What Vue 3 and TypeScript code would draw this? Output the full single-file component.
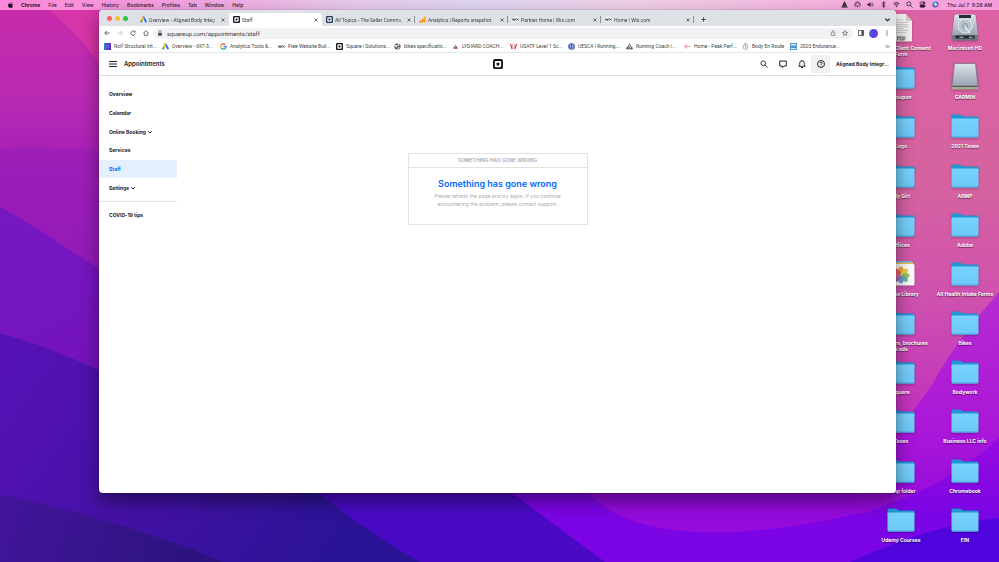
<script setup lang="ts">
import { ref } from 'vue'

interface Tab { title: string; icon: string }
interface Bookmark { label: string; icon: string; short?: boolean }
interface DesktopItem { label: string; icon: string }
interface NavItem { label: string; expandable?: boolean }

const menus: string[] = ['File', 'Edit', 'View', 'History', 'Bookmarks', 'Profiles', 'Tab', 'Window', 'Help']
const statusIcons: string[] = ['cone', 'airdrop', 'volume', 'bluetooth', 'wifi', 'search', 'control', 'siri']

const tabs: Tab[] = [
  { title: 'Overview - Aligned Body Integ', icon: 'ads' },
  { title: 'Staff', icon: 'square' },
  { title: 'All Topics - The Seller Commu', icon: 'squareblue' },
  { title: 'Analytics | Reports snapshot', icon: 'analytics' },
  { title: 'Partner Home | Wix.com', icon: 'wix' },
  { title: 'Home | Wix.com', icon: 'wix' },
]
const activeTab = ref(1)

const bookmarks: Bookmark[] = [
  { label: 'Rolf Structural Int...', icon: 'rolf' },
  { label: 'Overview - 697-3...', icon: 'ads' },
  { label: 'Analytics Tools &...', icon: 'google' },
  { label: 'Free Website Buil...', icon: 'wix' },
  { label: 'Square | Solutions...', icon: 'square' },
  { label: 'bikes specificatio...', icon: 'globe' },
  { label: 'LYDIARD COACH...', icon: 'lydiard' },
  { label: 'USATF Level 1 Sc...', icon: 'usatf' },
  { label: 'UESCA | Running,...', icon: 'uesca' },
  { label: 'Running Coach |...', icon: 'running' },
  { label: 'Home - Peak Perf...', icon: 'peak' },
  { label: 'Body En Route', icon: 'body', short: true },
  { label: '2020 Endurance...', icon: 'endurance' },
]

const nav: NavItem[] = [
  { label: 'Overview' },
  { label: 'Calendar' },
  { label: 'Online Booking', expandable: true },
  { label: 'Services' },
  { label: 'Staff' },
  { label: 'Settings', expandable: true },
]
const activeNav = ref('Staff')
const address = ref('squareup.com/appointments/staff')

const desktop: DesktopItem[] = [
  { label: 'Massage Client Consent Form', icon: 'pdf' },
  { label: 'Macintosh HD', icon: 'disk' },
  { label: 'Groupon', icon: 'folder' },
  { label: 'GARMIN', icon: 'drive' },
  { label: 'Logo', icon: 'folder' },
  { label: '2021 Taxes', icon: 'folder' },
  { label: 'My Girl', icon: 'folder' },
  { label: 'ABMP', icon: 'folder' },
  { label: 'Offices', icon: 'folder' },
  { label: 'Adobe', icon: 'folder' },
  { label: 'Photos Library', icon: 'photos' },
  { label: 'All Health Intake Forms', icon: 'folder' },
  { label: 'Bike flyers, brochures &\u00a0ads', icon: 'folder' },
  { label: 'Bikes', icon: 'folder' },
  { label: 'Square', icon: 'folder' },
  { label: 'Bodywork', icon: 'folder' },
  { label: 'Taxes', icon: 'folder' },
  { label: 'Business LLC info', icon: 'folder' },
  { label: 'Temp folder', icon: 'folder' },
  { label: 'Chromebook', icon: 'folder' },
  { label: 'Udemy Courses', icon: 'folder' },
  { label: 'EIN', icon: 'folder' },
]
</script>

<template>
  <div class="screen">
    <svg class="defs" aria-hidden="true">
      <defs>
        <linearGradient id="g-rolf"><stop offset="0" stop-color="#2b8fd0" /><stop offset=".5" stop-color="#4a3fc9" /><stop offset="1" stop-color="#6a28c8" /></linearGradient>
        <linearGradient id="g-folder" x2="0" y2="1"><stop offset="0" stop-color="#78d2fd" /><stop offset="1" stop-color="#6cc8f7" /></linearGradient>
        <linearGradient id="g-metal" x2="0" y2="1"><stop offset="0" stop-color="#dce4ea" /><stop offset="1" stop-color="#98a4ae" /></linearGradient>
      </defs>
      <symbol id="i-apple" viewBox="0 0 12 14"><path d="M8.2 0c.1 1.500-1 2.900-2.400 3C5.600 1.600 6.900.2 8.200 0zM11.500 10.500c-.7 1.700-1.700 3-2.800 3-1 0-1.300-.6-2.500-.6s-1.500.6-2.500.6C2 13.500.2 10.700.2 7.800c0-2.800 1.700-4.200 3.400-4.200 1.100 0 1.900.7 2.700.7s1.700-.7 3-.7c.7 0 1.700.3 2.300 1.200-2.200 1.300-1.900 4.600-.1 5.700z" /></symbol>
      <symbol id="i-cone" viewBox="0 0 16 16"><path d="M1 13h14v2H1z" fill="#222" /><path d="M7 1h2l5 12H2z" fill="#333" /></symbol>
      <symbol id="i-airdrop" viewBox="0 0 16 16" fill="none" stroke="currentColor" stroke-width="1.500"><path d="M3.500 13a6.500 6.500 0 1 1 9 0M5.500 11a3.800 3.800 0 1 1 5 0" /><path d="M8 9l-2 5h4z" fill="currentColor" stroke="none" /></symbol>
      <symbol id="i-volume" viewBox="0 0 16 16"><path d="M1 6h3l4-4v12l-4-4H1z" /><path d="M10 5.500q2 2.500 0 5M12 3.500q3.500 4.500 0 9" fill="none" stroke="currentColor" stroke-width="1.300" /></symbol>
      <symbol id="i-bluetooth" viewBox="0 0 16 16" fill="none" stroke="currentColor" stroke-width="1.600"><path d="M4 4.500l8 7L8 15V1l4 3.500-8 7" /></symbol>
      <symbol id="i-wifi" viewBox="0 0 16 16" fill="none" stroke="currentColor" stroke-width="1.900"><path d="M1 6q7-6 14 0M3.500 9q4.500-4 9 0" /><path d="M8 14l-2.500-3q2.500-2 5 0z" fill="currentColor" stroke="none" /></symbol>
      <symbol id="i-search" viewBox="0 0 16 16" fill="none" stroke="currentColor" stroke-width="1.800"><circle cx="6.500" cy="6.500" r="4.700" /><path d="M10 10l5 5" /></symbol>
      <symbol id="i-control" viewBox="0 0 16 16" fill="none" stroke="currentColor" stroke-width="1.500"><rect x="2" y="2" width="12" height="5" rx="2.500" /><rect x="2" y="9" width="12" height="5" rx="2.500" fill="currentColor" /><circle cx="11" cy="4.500" r="1.500" fill="currentColor" /></symbol>
      <symbol id="i-siri" viewBox="0 0 16 16"><circle cx="8" cy="8" r="7" fill="#3e60c9" /><path d="M2 5a7 7 0 0 1 8-4l-2 7z" fill="#35c4d4" /><path d="M14 4a7 7 0 0 1-3 10L8 8z" fill="#e04f92" /><circle cx="8" cy="8" r="3" fill="#e5f5ff" /></symbol>

      <symbol id="i-ads" viewBox="0 0 16 16"><path d="M8 2.500l5.500 10" stroke="#2f74ea" stroke-width="4.400" stroke-linecap="round" /><path d="M7.500 3L3 11" stroke="#f6b90b" stroke-width="4" stroke-linecap="round" /><circle cx="3" cy="12.300" r="2.400" fill="#34a853" /></symbol>
      <symbol id="i-square" viewBox="0 0 16 16"><rect width="16" height="16" rx="3" fill="#15171a" /><rect x="3" y="3" width="10" height="10" rx="1.500" fill="#fff" /><rect x="5.800" y="5.800" width="4.400" height="4.400" rx=".8" fill="#15171a" /></symbol>
      <symbol id="i-squareblue" viewBox="0 0 16 16"><rect width="16" height="16" rx="3" fill="#273650" /><rect x="3" y="3" width="10" height="10" rx="1.500" fill="#fff" /><rect x="5.500" y="5.500" width="5" height="5" rx=".8" fill="#273650" /></symbol>
      <symbol id="i-analytics" viewBox="0 0 16 16"><rect x="11" y="1" width="4" height="14" rx="2" fill="#f9ab00" /><rect x="6" y="6" width="4.500" height="9" rx="2" fill="#ef8420" /><circle cx="3" cy="13" r="2.200" fill="#e37400" /></symbol>
      <symbol id="i-wix" viewBox="0 0 16 16"><rect y="3" width="16" height="10" fill="#fff" /><path d="M1 5.500l1.500 5 1.500-4 1.500 4 1.500-5M9 5.500v5M10.500 5.500l4.500 5M15 5.500l-4.500 5" fill="none" stroke="#222" stroke-width="1.500" /></symbol>
      <symbol id="i-rolf" viewBox="0 0 16 16"><rect width="16" height="16" fill="url(#g-rolf)" /><rect x="4" y="4" width="7" height="8" fill="#5e5bdc" /></symbol>
      <symbol id="i-google" viewBox="0 0 16 16" fill="none" stroke-width="3"><path d="M3 4.800A6 6 0 0 1 12 3.500" stroke="#ea4335" /><path d="M3 11a6 6 0 0 1 0-6" stroke="#fbbc04" /><path d="M12 12.500A6 6 0 0 1 3 11" stroke="#34a853" /><path d="M8 8h6q0 3-2.200 4.700" stroke="#4285f4" /></symbol>
      <symbol id="i-globe" viewBox="0 0 16 16"><circle cx="8" cy="8" r="7" fill="#4c5055" /><path d="M3 4l4 2 1 3-3 1-3-3zM9 2l4 2-2 3-3-1zM9 10l4-1-2 4-3 1z" fill="#fff" /></symbol>
      <symbol id="i-lydiard" viewBox="0 0 16 16"><path d="M8 4l4 6H4z" fill="#555" /><path d="M3 10h10v3H3z" fill="#a33440" /><circle cx="8" cy="8" r="1.200" fill="#fff" /></symbol>
      <symbol id="i-usatf" viewBox="0 0 16 16" fill="none" stroke="#d02733" stroke-width="2.600"><path d="M1 2l4 12M15 2l-4 12" /><path d="M6 2v8q2 4 4 0V2" stroke="#e9777d" stroke-width="1.500" /></symbol>
      <symbol id="i-uesca" viewBox="0 0 16 16"><circle cx="8" cy="8" r="7.500" fill="#3450b2" /><circle cx="8" cy="8" r="5.500" fill="none" stroke="#b9c4f0" /><path d="M5.500 5v4q2.500 4 5 0V5" fill="none" stroke="#fff" stroke-width="1.500" /></symbol>
      <symbol id="i-running" viewBox="0 0 16 16" fill="none" stroke="#44474b" stroke-width="1.600"><path d="M8 2l6 11H2zM5 8l6 5M10 6l-6 7" /><circle cx="3" cy="12" r="2" /><circle cx="13" cy="12" r="2" /></symbol>
      <symbol id="i-peak" viewBox="0 0 16 16" fill="none" stroke="#e6747c" stroke-width="1.500"><path d="M1 5h7M1 8h14M1 11h6" /></symbol>
      <symbol id="i-body" viewBox="0 0 16 16" fill="none" stroke="#777a7e" stroke-width="1.400"><circle cx="8" cy="9" r="5.500" /><path d="M5 2h6M8 5v5l3 1" /></symbol>
      <symbol id="i-endurance" viewBox="0 0 16 16"><rect x=".7" y=".7" width="14.600" height="14.600" fill="#d8edfa" stroke="#1d6aa8" stroke-width="1.500" /><path d="M2 6h12v5H2z" fill="#2478b5" /><path d="M3 8.500h10" stroke="#fff" stroke-width="1.200" stroke-dasharray="2 1" /></symbol>

      <symbol id="i-close" viewBox="0 0 16 16" fill="none" stroke="currentColor" stroke-width="3"><path d="M2 2l12 12M14 2L2 14" /></symbol>
      <symbol id="i-plus" viewBox="0 0 16 16" fill="none" stroke="currentColor" stroke-width="3"><path d="M8 1v14M1 8h14" /></symbol>
      <symbol id="i-down" viewBox="0 0 16 16" fill="none" stroke="currentColor" stroke-width="4"><path d="M1 5l7 7 7-7" /></symbol>
      <symbol id="i-back" viewBox="0 0 16 16" fill="none" stroke="currentColor" stroke-width="2.200"><path d="M15 8H2M8 2L2 8l6 6" /></symbol>
      <symbol id="i-forward" viewBox="0 0 16 16" fill="none" stroke="currentColor" stroke-width="2.200"><path d="M1 8h13M8 2l6 6-6 6" /></symbol>
      <symbol id="i-reload" viewBox="0 0 16 16" fill="none" stroke="currentColor" stroke-width="2.200"><path d="M13 4.500A6 6 0 1 0 14 10" /><path d="M14.500 1v5.500H9z" fill="currentColor" stroke="none" /></symbol>
      <symbol id="i-home" viewBox="0 0 16 16" fill="none" stroke="currentColor" stroke-width="2"><path d="M1 8l7-6 7 6M3.500 7v7.500h9V7" /></symbol>
      <symbol id="i-lock" viewBox="0 0 16 16"><rect x="3" y="7" width="10" height="8" rx="1" fill="currentColor" /><path d="M5 7V4.500a3 3 0 0 1 6 0V7" fill="none" stroke="currentColor" stroke-width="1.700" /></symbol>
      <symbol id="i-share" viewBox="0 0 16 16" fill="none" stroke="currentColor" stroke-width="1.500"><path d="M5 7H3v8h10V7h-2M8 10V2M5 4.500L8 1.500l3 3" /></symbol>
      <symbol id="i-star" viewBox="0 0 16 16" fill="none" stroke="currentColor" stroke-width="1.600"><path d="M8 1.500l2 4.600 5 .4-3.800 3.200 1.200 4.800L8 12l-4.400 2.500 1.200-4.800L1 6.500l5-.4z" /></symbol>
      <symbol id="i-panel" viewBox="0 0 16 16"><rect x="1.500" y="1.500" width="13" height="13" fill="none" stroke="currentColor" stroke-width="2" /><path d="M9 1h6v14H9z" /></symbol>
      <symbol id="i-dots" viewBox="0 0 16 16"><circle cx="8" cy="2.500" r="1.800" /><circle cx="8" cy="8" r="1.800" /><circle cx="8" cy="13.500" r="1.800" /></symbol>
      <symbol id="i-more" viewBox="0 0 16 16" fill="none" stroke="currentColor" stroke-width="2.400"><path d="M3 4l4 4-4 4M9 4l4 4-4 4" /></symbol>
      <symbol id="i-menu" viewBox="0 0 16 16" stroke="currentColor" stroke-width="2"><path d="M0 3h16M0 8h16M0 13h16" /></symbol>
      <symbol id="i-chat" viewBox="0 0 16 16" fill="none" stroke="currentColor" stroke-width="2"><path d="M1.500 2h13v10H9.500L6.500 15v-3h-5z" /></symbol>
      <symbol id="i-bell" viewBox="0 0 16 16" fill="none" stroke="currentColor" stroke-width="1.900"><path d="M1.500 12.500h13L12.500 9.500V6a4.500 4.500 0 0 0-9 0v3.500zM8 0v2M6 15h4" /></symbol>
      <symbol id="i-help" viewBox="0 0 16 16" fill="none" stroke="currentColor" stroke-width="1.900"><circle cx="8" cy="8" r="7" /><path d="M5.800 6.500a2.200 2.200 0 1 1 3.300 1.900Q8 9 8 10" /><path d="M8 11v1.600" /></symbol>

      <symbol id="i-folder" viewBox="0 0 56 56"><path d="M1 8q0-3 3-3h13q2 0 3 1l4 3h28q3 0 3 3v8H1z" fill="#2196d4" /><path d="M1 15q0-2 2-2h50q2 0 2 2v33q0 3-3 3H4q-3 0-3-3z" fill="url(#g-folder)" /><path d="M1 46v2q0 3 3 3h48q3 0 3-3v-2q0 3-3 3H4q-3 0-3-3z" fill="#4aa5db" /></symbol>
      <symbol id="i-disk" viewBox="0 0 56 56"><path d="M7 3q0-2 3-2h36q3 0 3 2l5 40H2z" fill="url(#g-metal)" /><path d="M2 42h52v8q0 3-3 3H5q-3 0-3-3z" fill="#6d7980" /><path d="M9 43h38v6H9z" fill="#22282c" /><path d="M17 45h8v3h-8zM36 45h7v3h-7z" fill="#8b979f" /><circle cx="28" cy="24" r="14" fill="#b8c3cc" stroke="#e4ebef" stroke-width="2" /><circle cx="28" cy="24" r="5" fill="none" stroke="#8796a2" stroke-width="2" /><path d="M16 2h24v6H16z" fill="#282e32" /><path d="M28 26l10 12" stroke="#e6edf2" stroke-width="3" /></symbol>
      <symbol id="i-drive" viewBox="0 0 56 56"><path d="M7 1h42l5 45H2z" fill="url(#g-metal)" stroke="#77767f" stroke-width="1.500" /><path d="M2 46h52v5q0 2-2 2H4q-2 0-2-2z" fill="#aaa895" /><path d="M3 46h50v2H3z" fill="#55585a" /><circle cx="48" cy="50" r="1.700" fill="#4bd44b" /></symbol>
      <symbol id="i-pdf" viewBox="0 0 56 56"><path d="M8 0h30l12 14v41H8z" fill="#f1f0ef" /><path d="M38 0l12 14H38z" fill="#cfcdcc" /><path d="M14 12h18M14 17h28M14 21h28M14 25h28M14 29h20M14 33h28M14 37h24" stroke="#c1bfc0" stroke-width="1.500" /><text x="29" y="51" text-anchor="middle" font-size="9" fill="#777">PDF</text></symbol>
      <symbol id="i-photos" viewBox="0 0 56 56"><path d="M6 2h44l3 8H3z" fill="#65b9e8" /><path d="M4 5h48l2 8H2z" fill="#efbd54" /><path d="M1 11q0-3 3-3h48q3 0 3 3v37q0 3-3 3H4q-3 0-3-3z" fill="#fafafa" /><g opacity=".9"><ellipse cx="28" cy="21" rx="5" ry="8" fill="#f59a27" /><ellipse cx="35" cy="24" rx="5" ry="8" transform="rotate(45 35 24)" fill="#e8cb31" /><ellipse cx="37" cy="31" rx="8" ry="5" fill="#9bbd45" /><ellipse cx="35" cy="37" rx="5" ry="8" transform="rotate(-45 35 37)" fill="#57b58a" /><ellipse cx="28" cy="39" rx="5" ry="8" fill="#5b8fd0" /><ellipse cx="21" cy="37" rx="5" ry="8" transform="rotate(45 21 37)" fill="#8b63b3" /><ellipse cx="19" cy="31" rx="8" ry="5" fill="#cc5592" /><ellipse cx="21" cy="24" rx="5" ry="8" transform="rotate(-45 21 24)" fill="#e65344" /></g></symbol>
    </svg>

    <svg class="wallpaper" viewBox="0 0 999 562" preserveAspectRatio="none" aria-hidden="true">
      <defs>
        <linearGradient id="w-top" gradientUnits="userSpaceOnUse" x1="0" y1="10" x2="0" y2="300"><stop offset="0" stop-color="#c72cac" /><stop offset=".3" stop-color="#b92ab2" /><stop offset=".55" stop-color="#a41fb8" /><stop offset="1" stop-color="#8a1ab6" /></linearGradient>
        <linearGradient id="w-mid" gradientUnits="userSpaceOnUse" x1="0" y1="200" x2="80" y2="380"><stop offset="0" stop-color="#7618c2" /><stop offset="1" stop-color="#7413bd" /></linearGradient>
        <linearGradient id="w-low" gradientUnits="userSpaceOnUse" x1="0" y1="330" x2="320" y2="562"><stop offset="0" stop-color="#5812b8" /><stop offset=".5" stop-color="#4511a6" /><stop offset="1" stop-color="#2b1396" /></linearGradient>
        <linearGradient id="w-dark" gradientUnits="userSpaceOnUse" x1="0" y1="495" x2="200" y2="562"><stop offset="0" stop-color="#42159c" /><stop offset="1" stop-color="#2b137d" /></linearGradient>
        <linearGradient id="w-pink" gradientUnits="userSpaceOnUse" x1="0" y1="10" x2="0" y2="450"><stop offset="0" stop-color="#dc62a6" /><stop offset=".4" stop-color="#d5629f" /><stop offset=".65" stop-color="#cf52ae" /><stop offset="1" stop-color="#bd28c3" /></linearGradient>
        <linearGradient id="w-violet" gradientUnits="userSpaceOnUse" x1="0" y1="290" x2="0" y2="510"><stop offset="0" stop-color="#b62bd0" /><stop offset=".6" stop-color="#ac18d8" /><stop offset="1" stop-color="#940bdc" /></linearGradient>
        <linearGradient id="w-blue" gradientUnits="userSpaceOnUse" x1="0" y1="430" x2="0" y2="515"><stop offset="0" stop-color="#9a0adf" /><stop offset="1" stop-color="#7b05e5" /></linearGradient>
      </defs>
      <rect width="999" height="562" fill="url(#w-top)" />
      <path d="M48 9Q80 35 110 78V9z" fill="#d735a8" />
      <path d="M0 148Q60 144 110 154V300H0z" fill="#931bb8" opacity=".5" />
      <path d="M0 207C30 222 60 245 110 275V400H0z" fill="url(#w-mid)" />
      <path d="M0 333Q45 345 110 375L500 562H0z" fill="url(#w-low)" />
      <path d="M99 375L400 400V562H99z" fill="url(#w-low)" />
      <path d="M0 494C80 512 165 536 222 562H0z" fill="url(#w-dark)" />
      <path d="M290 470Q355 525 420 562H700V400H290z" fill="#4a0ac5" />
      <path d="M470 462L605 562H999V400H470z" fill="#7b05e5" />
      <path d="M860 10H999V562H860z" fill="url(#w-blue)" />
      <path d="M580 480C620 555 780 535 880 508V300H580z" fill="#940bdc" />
      <path d="M860 10H999V438Q945 489 860 514z" fill="url(#w-violet)" />
      <path d="M860 10H999V292Q955 342 932 385L885 450H860z" fill="url(#w-pink)" />
      <path d="M850 562Q930 525 999 518V562z" fill="#5204df" />
    </svg>

    <header class="menubar">
      <svg class="apple"><use href="#i-apple" /></svg>
      <button class="app-name">Chrome</button>
      <button v-for="m in menus" :key="m">{{ m }}</button>
      <span class="grow"></span>
      <div class="status">
        <svg v-for="s in statusIcons" :key="s"><use :href="'#i-' + s" /></svg>
      </div>
      <time>Thu Jul 7&nbsp; 9:26 AM</time>
    </header>

    <ul class="desktop">
      <li v-for="item in desktop" :key="item.label">
        <svg><use :href="'#i-' + item.icon" /></svg>
        <span>{{ item.label }}</span>
      </li>
    </ul>

    <section class="window">
      <div class="tabstrip">
        <div class="lights"><button class="red" aria-label="Close window"></button><button class="amber" aria-label="Minimize"></button><button class="green" aria-label="Zoom"></button></div>
        <div v-for="(t, i) in tabs" :key="t.title" class="tab" :class="{ active: i === activeTab, divided: i > activeTab }">
          <svg class="fav"><use :href="'#i-' + t.icon" /></svg>
          <button class="tab-title" @click="activeTab = i">{{ t.title }}</button>
          <button class="tab-close" aria-label="Close tab"><svg><use href="#i-close" /></svg></button>
        </div>
        <button class="new-tab" aria-label="New tab"><svg><use href="#i-plus" /></svg></button>
        <span class="grow"></span>
        <button class="tab-search" aria-label="Search tabs"><svg><use href="#i-down" /></svg></button>
      </div>

      <div class="toolbar">
        <button aria-label="Back"><svg><use href="#i-back" /></svg></button>
        <button class="dim" aria-label="Forward"><svg><use href="#i-forward" /></svg></button>
        <button aria-label="Reload"><svg><use href="#i-reload" /></svg></button>
        <button aria-label="Home"><svg><use href="#i-home" /></svg></button>
        <div class="omnibox">
          <svg><use href="#i-lock" /></svg>
          <input v-model="address" type="text" aria-label="Address" />
          <button aria-label="Share"><svg><use href="#i-share" /></svg></button>
          <button aria-label="Bookmark"><svg><use href="#i-star" /></svg></button>
        </div>
        <button aria-label="Side panel"><svg><use href="#i-panel" /></svg></button>
        <button aria-label="Profile"><span class="avatar"></span></button>
        <button aria-label="Menu"><svg><use href="#i-dots" /></svg></button>
      </div>

      <nav class="bookmarks">
        <a v-for="b in bookmarks" :key="b.label" href="#" :class="{ short: b.short }">
          <svg><use :href="'#i-' + b.icon" /></svg>{{ b.label }}
        </a>
        <span class="grow"></span>
        <button aria-label="More bookmarks"><svg><use href="#i-more" /></svg></button>
      </nav>

      <header class="appbar">
        <div class="appbar-left">
          <button aria-label="Navigation"><svg><use href="#i-menu" /></svg></button>
          <h1>Appointments</h1>
        </div>
        <svg class="logo"><use href="#i-square" /></svg>
        <div class="appbar-right">
          <button aria-label="Search"><svg><use href="#i-search" /></svg></button>
          <button aria-label="Messages"><svg><use href="#i-chat" /></svg></button>
          <button aria-label="Notifications"><svg><use href="#i-bell" /></svg></button>
          <button class="help" aria-label="Help"><svg><use href="#i-help" /></svg></button>
          <button class="account">Aligned Body Integr...</button>
        </div>
      </header>

      <div class="content">
        <aside>
          <nav class="side">
            <a v-for="n in nav" :key="n.label" href="#" :class="{ current: n.label === activeNav }" @click.prevent="activeNav = n.label">
              {{ n.label }}<svg v-if="n.expandable"><use href="#i-down" /></svg>
            </a>
          </nav>
          <a class="tips" href="#">COVID-19 tips</a>
        </aside>
        <main>
          <article class="notice">
            <header>SOMETHING HAS GONE WRONG</header>
            <h2>Something has gone wrong</h2>
            <p>Please refresh the page and try again. If you continue encountering the problem, please contact support.</p>
          </article>
        </main>
      </div>
    </section>
  </div>
</template>

<style>
body { margin: 0; }
</style>

<style scoped>
* { box-sizing: border-box; }
.screen {
  position: relative;
  display: flex;
  flex-direction: column;
  min-height: 100vh;
  overflow: hidden;
  font: 5px/8px Inter, "Liberation Sans", sans-serif;
  color: #202124;
}
.defs { position: absolute; width: 0; height: 0; }
.wallpaper { position: absolute; inset: 0; width: 100%; height: 100%; }
button { padding: 0; border: 0; background: none; font: inherit; color: inherit; display: flex; align-items: center; justify-content: center; }
svg { fill: currentColor; flex: none; }
a { color: inherit; text-decoration: none; }
.grow { flex: 1; }

.menubar {
  position: relative;
  display: flex;
  align-items: center;
  gap: 8px;
  height: 10px;
  padding: 0 7px 1px 8px;
  background: linear-gradient(90deg, #fd86d8, #f0a5df 20%, #e6c9ea 35%, #dfd5f1 47%, #efcfe7 64%, #f5b7e0 80%, #f79bdb);
  color: #35152f;
  font-weight: 500;
}
.menubar .apple { width: 5px; height: 6px; color: #111; }
.menubar .app-name { font-weight: 700; }
.status { display: flex; gap: 6px; }
.status svg { width: 7px; height: 7px; }

.desktop {
  position: absolute;
  top: 14px;
  right: 2px;
  bottom: 7px;
  display: grid;
  grid-template-columns: 64px 64px;
  grid-template-rows: repeat(11, 1fr);
  margin: 0;
  padding: 0;
  list-style: none;
}
.desktop li { display: flex; flex-direction: column; align-items: center; min-height: 0; text-align: center; line-height: 6px; font-weight: 700; color: #fff; text-shadow: 0 1px 1px rgba(0, 0, 0, .6); }
.desktop svg { width: 28px; height: 28px; margin-bottom: 3px; filter: drop-shadow(0 1px 1px rgba(0, 0, 0, .25)); }
.desktop span { max-width: 62px; }

.window {
  position: relative;
  flex: 1;
  display: flex;
  flex-direction: column;
  margin: 0 103px 69px 99px;
  border-radius: 4px;
  background: #fff;
  box-shadow: 0 0 1px rgba(0, 0, 0, .5), 0 8px 18px rgba(0, 0, 0, .45);
}
.tabstrip, .toolbar, .bookmarks { font-family: Roboto, "Liberation Sans", sans-serif; }
.tabstrip { display: flex; height: 16px; padding: 3px 4px 0 8px; border-radius: 4px 4px 0 0; background: #dee1e6; color: #3c3f43; }
.lights { display: flex; align-items: center; gap: 3px; width: 29px; padding-bottom: 2px; }
.lights button { width: 5px; height: 5px; border-radius: 50%; }
.red { background: #fe5f57; }
.amber { background: #febc2e; }
.green { background: #28c840; }
.tab { display: flex; align-items: center; gap: 2px; flex: 0 1 93px; min-width: 0; padding: 0 4px; border-radius: 3px 3px 0 0; }
.tab.active { background: #fff; }
.tab.divided { background: linear-gradient(#8a8e94, #8a8e94) right center / 1px 7px no-repeat; }
.fav { width: 7px; height: 7px; }
.tab-title { flex: 1; min-width: 0; white-space: nowrap; justify-content: flex-start; mask-image: linear-gradient(90deg, #000 88%, rgba(0, 0, 0, .2)); }
.tab-close svg, .new-tab svg, .tab-search svg { width: 5px; height: 5px; }
.tab-close svg { width: 4px; height: 4px; }
.new-tab { width: 18px; }
.tab-search { width: 9px; }

.toolbar { display: flex; align-items: center; gap: 2px; height: 14px; padding: 0 4px 0 2px; color: #4b4e53; }
.toolbar > button { width: 11px; height: 11px; }
.toolbar svg { width: 6px; height: 6px; }
.toolbar .dim { color: #bcbfc3; }
.omnibox { display: flex; align-items: center; gap: 4px; flex: 1; height: 11px; padding: 0 4px; border-radius: 6px; background: #f0f2f4; }
.omnibox input { flex: 1; min-width: 0; height: 9px; padding: 0; border: 0; outline: 0; background: none; font: inherit; font-size: 6px; color: #3c4044; }
.omnibox button { width: 8px; }
.avatar { width: 9px; height: 9px; border-radius: 50%; background: linear-gradient(100deg, #3f73dd, #5b3fda 50%, #7a30d8); }

.bookmarks { display: flex; align-items: center; height: 13px; padding: 0 5px; border-bottom: 1px solid #e6e7e9; color: #3c3f43; }
.bookmarks a { display: flex; align-items: center; gap: 3px; flex: 0 0 58px; white-space: nowrap; }
.bookmarks a.short { flex-basis: 48px; }
.bookmarks svg { width: 7px; height: 7px; }
.bookmarks button { width: 7px; }
.bookmarks button svg { width: 5px; height: 5px; }

.appbar { display: grid; grid-template-columns: 1fr auto 1fr; align-items: center; height: 23px; padding: 0 7px; border-bottom: 1px solid #dfe0e1; }
.appbar-left { display: flex; align-items: center; gap: 7px; padding-left: 3px; }
.appbar svg { width: 8px; height: 8px; }
.appbar h1 { margin: 0; font-size: 6px; font-weight: 600; }
.appbar .logo { width: 10px; height: 10px; }
.appbar-right { display: flex; justify-content: flex-end; align-items: center; }
.appbar-right button { width: 19px; height: 18px; }
.appbar-right .help { background: #f1f1f1; border-radius: 2px; }
.appbar-right .account { width: auto; margin-left: 6px; font-weight: 700; white-space: nowrap; }

.content { display: grid; grid-template-columns: 78px 1fr 78px; flex: 1; padding-top: 9px; }
.side { display: grid; grid-auto-rows: 1fr; height: 112px; }
.side a { display: flex; align-items: center; gap: 2px; padding-left: 10px; font-weight: 700; white-space: nowrap; }
.side svg { width: 4px; height: 4px; }
.side .current { background: #e5f0ff; color: #006aff; }
.tips { display: block; margin-top: 4px; padding: 9px 0 0 10px; border-top: 1px solid #e2e3e4; font-weight: 700; }
main { display: flex; justify-content: center; align-items: flex-start; }
.notice { flex: 0 1 180px; height: 72px; margin-top: 68px; border: 1px solid #e2e2e2; text-align: center; color: #a9abae; }
.notice header { padding: 2px 0 3px; border-bottom: 1px solid #e2e2e2; font-weight: 600; }
.notice h2 { margin: 10px 0 2px; font-size: 9px; line-height: 12px; font-weight: 600; color: #006aff; }
.notice p { margin: 0 auto; max-width: 140px; }
</style>
